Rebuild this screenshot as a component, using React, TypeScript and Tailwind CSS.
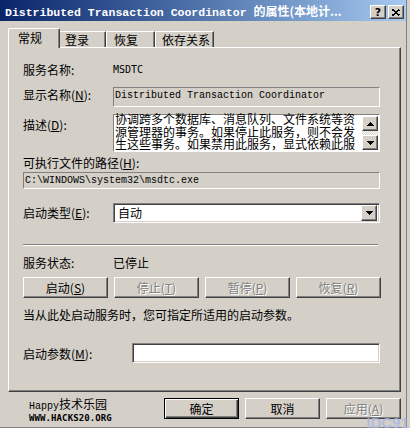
import React from 'react';

const cjk = "font-['Noto_Sans_CJK_SC',sans-serif]";
const mono = "font-['Liberation_Mono','Noto_Sans_CJK_SC',monospace]";

// classic 3D edges
const raised =
  'border border-t-white border-l-white border-b-[#404040] border-r-[#404040] shadow-[inset_-1px_-1px_0_#808080]';
const staticEdge = 'border border-t-[#808080] border-l-[#808080] border-b-white border-r-white';
const sunken =
  'border border-t-[#808080] border-l-[#808080] border-b-white border-r-white shadow-[inset_1px_1px_0_#404040,inset_-1px_-1px_0_#d4d0c8]';
const greyed = 'text-[#808080] [text-shadow:1px_1px_0_#fff]';

function Key({ k }: { k: string }) {
  return (
    <>
      (<span className="underline underline-offset-[1px]">{k}</span>)
    </>
  );
}

function Arrow({ dir }: { dir: 'up' | 'down' }) {
  return (
    <svg width="7" height="4" viewBox="0 0 7 4" shapeRendering="crispEdges">
      <path d={dir === 'up' ? 'M3.5 0L7 4H0z' : 'M0 0h7L3.5 4z'} fill="#000" />
    </svg>
  );
}

function PushButton({ children, off, width = 'w-[85px]' }: { children: React.ReactNode; off?: boolean; width?: string }) {
  return (
    <div className={`${width} h-[21px] ${raised} flex items-center justify-center text-[12px] leading-[16px] ${off ? greyed : 'text-black'}`}>
      {children}
    </div>
  );
}

export default function App() {
  return (
    <div className={`relative w-[410px] h-[428px] overflow-hidden bg-[#d4d0c8] ${cjk} text-black text-[12px]`}>
      <div className="w-[407px] h-[428px] border-r border-b border-[#808080] flex flex-col">
        {/* title bar */}
        <div className="flex h-[21px] w-[406px] items-start bg-linear-to-r from-[#0a246a] to-[#a6caf0]">
          <div className="flex-1 pl-[5px] pt-[4px] leading-[14px] whitespace-nowrap text-white font-bold">
            <span className={`${mono} text-[11.5px]`}>Distributed Transaction Coordinator </span>
            <span className="text-[12px]">的属性(本地计...</span>
          </div>
          <div className="flex gap-[2px] mt-[5px] mr-[2px]">
            <div className={`w-[16px] h-[14px] bg-[#d4d0c8] ${raised} flex items-center justify-center`}>
              <span className="font-['DejaVu_Sans',sans-serif] font-bold text-[11px] leading-[11px]">?</span>
            </div>
            <div className={`w-[16px] h-[14px] bg-[#d4d0c8] ${raised} flex items-center justify-center`}>
              <svg width="8" height="7" viewBox="0 0 8 7" shapeRendering="crispEdges">
                <path d="M0.5 0.5L7.5 6.5M7.5 0.5L0.5 6.5" stroke="#000" strokeWidth="1.6" />
              </svg>
            </div>
          </div>
        </div>

        {/* tabs */}
        <div className="mt-[7px] h-[19px] pl-[8px] flex items-end">
          <div className="relative z-10 -mb-px w-[52px] h-[20px] pl-[9px] pt-px leading-[16px] bg-[#d4d0c8] border-t border-l border-white border-r border-r-[#404040] shadow-[inset_-1px_0_0_#808080] rounded-t-[2px]">
            常规
          </div>
          <div className="w-[46px] h-[16px] pl-[5px] leading-[16px] border-t border-white border-r border-r-[#404040] shadow-[inset_-1px_0_0_#808080]">
            登录
          </div>
          <div className="w-[49px] h-[16px] pl-[7px] leading-[16px] border-t border-l border-white border-r border-r-[#404040] shadow-[inset_-1px_0_0_#808080]">
            恢复
          </div>
          <div className="w-[59px] h-[16px] pl-[6px] leading-[16px] border-t border-l border-white border-r border-r-[#404040] shadow-[inset_-1px_0_0_#808080]">
            依存关系
          </div>
        </div>

        {/* tab page */}
        <div className="ml-[8px] w-[393px] h-[345px] border-t border-l border-white border-r border-b border-r-[#404040] border-b-[#404040] shadow-[inset_-1px_-1px_0_#808080] pl-[14px] flex flex-col">
          <div className="mt-[14px] h-[16px] flex items-center leading-[16px]">
            <div className="w-[90px] shrink-0">服务名称:</div>
            <div className="font-['DejaVu_Sans_Mono',monospace] text-[10px]">MSDTC</div>
          </div>

          <div className="mt-[9px] h-[20px] flex items-start">
            <div className="w-[90px] shrink-0 leading-[16px]">
              显示名称<Key k="N" />:
            </div>
            <div className={`w-[267px] h-[20px] ${staticEdge} pl-[1px] pt-[1px] ${mono} text-[10px] leading-[14px] whitespace-nowrap`}>
              Distributed Transaction Coordinator
            </div>
          </div>

          <div className="mt-[7px] h-[38px] flex items-start">
            <div className="w-[90px] shrink-0 mt-[3px] leading-[16px]">
              描述<Key k="D" />:
            </div>
            <div className={`w-[267px] h-[38px] ${staticEdge} bg-white flex`}>
              <div className="flex-1 pl-[1px] -mt-[2px] leading-[12.5px] whitespace-nowrap">
                <div>协调跨多个数据库、消息队列、文件系统等资</div>
                <div>源管理器的事务。如果停止此服务，则不会发</div>
                <div>生这些事务。如果禁用此服务，显式依赖此服</div>
              </div>
              <div className="w-[16px] flex flex-col my-px mr-px">
                <div className={`h-[15px] bg-[#d4d0c8] ${raised} flex items-center justify-center`}>
                  <Arrow dir="up" />
                </div>
                <div className="flex-1 bg-[repeating-conic-gradient(#fff_0%_25%,#d4d0c8_0%_50%)] bg-[length:2px_2px]" />
                <div className={`h-[15px] bg-[#d4d0c8] ${raised} flex items-center justify-center`}>
                  <Arrow dir="down" />
                </div>
              </div>
            </div>
          </div>

          <div className="mt-[3px] leading-[16px]">
            可执行文件的路径<Key k="H" />:
          </div>
          <div className={`mt-px w-[357px] h-[17px] ${staticEdge} pl-[1px] ${mono} text-[10px] leading-[15px] whitespace-nowrap`}>
            C:\WINDOWS\system32\msdtc.exe
          </div>

          <div className="mt-[14px] h-[20px] flex items-start">
            <div className="w-[90px] shrink-0 mt-[2px] leading-[16px]">
              启动类型<Key k="E" />:
            </div>
            <div className={`w-[267px] h-[20px] ${sunken} bg-white flex items-center pl-[4px] pr-[2px]`}>
              <div className="flex-1 leading-[16px]">自动</div>
              <div className={`w-[16px] h-[16px] bg-[#d4d0c8] ${raised} flex items-center justify-center`}>
                <Arrow dir="down" />
              </div>
            </div>
          </div>

          <div className="mt-[21px] w-[355px] h-[2px] border-t border-t-[#808080] border-b border-b-white" />

          <div className="mt-[9px] h-[16px] flex items-center leading-[16px]">
            <div className="w-[90px] shrink-0">服务状态:</div>
            <div>已停止</div>
          </div>

          <div className="mt-[6px] flex gap-[6px]">
            <PushButton>
              启动<Key k="S" />
            </PushButton>
            <PushButton off>
              停止<Key k="T" />
            </PushButton>
            <PushButton off>
              暂停<Key k="P" />
            </PushButton>
            <PushButton off>
              恢复<Key k="R" />
            </PushButton>
          </div>

          <div className="mt-[9px] leading-[16px]">当从此处启动服务时，您可指定所适用的启动参数。</div>

          <div className="mt-[20px] h-[20px] flex items-start">
            <div className="w-[109px] shrink-0 mt-[3px] leading-[16px]">
              启动参数<Key k="M" />:
            </div>
            <div className={`w-[248px] h-[20px] ${sunken} bg-white`} />
          </div>
        </div>

        {/* footer */}
        <div className="mt-[5px] flex items-start">
          <div className="ml-[29px] w-[135px] flex flex-col">
            <div className="leading-[14px] whitespace-nowrap">
              <span className={`${mono} text-[10px]`}>Happy</span>技术乐园
            </div>
            <div className="font-['DejaVu_Sans_Mono',monospace] font-bold text-[9px] leading-[8px] tracking-[0.1px]">
              WWW.HACKS20.ORG
            </div>
          </div>
          <div className="mt-px flex gap-[6px]">
            <div className="w-[75px] h-[21px] border border-black shadow-[inset_1px_1px_0_#fff,inset_-1px_-1px_0_#404040,inset_-2px_-2px_0_#808080] flex items-center justify-center leading-[16px]">
              确定
            </div>
            <PushButton width="w-[75px]">取消</PushButton>
            <PushButton width="w-[75px]" off>
              应用<Key k="A" />
            </PushButton>
          </div>
        </div>
      </div>

      {/* watermark */}
      <div className="absolute right-[1px] bottom-[-3px] font-['Liberation_Sans',sans-serif] font-bold text-[15px] leading-[16px] text-[#aab6e4] opacity-80">
        IDC91
      </div>
    </div>
  );
}
